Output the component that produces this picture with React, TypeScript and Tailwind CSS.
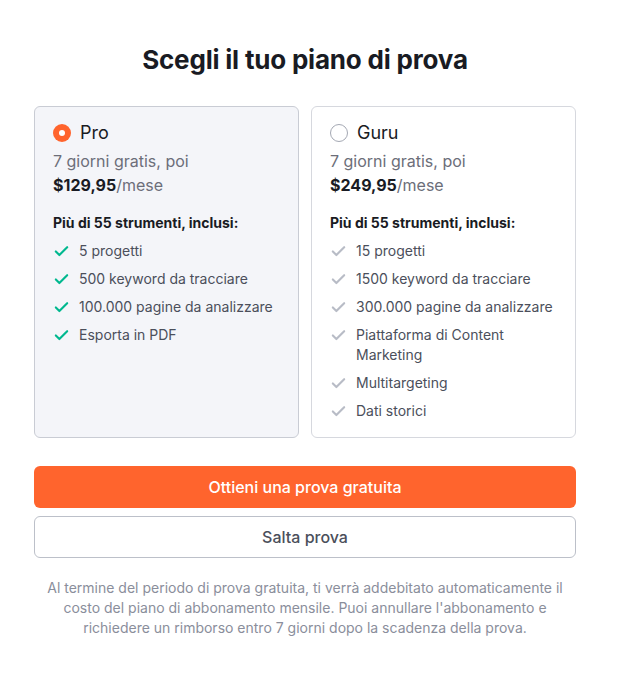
import { Check } from 'lucide-react';

type Plan = {
  id: string;
  name: string;
  price: string;
  features: string[];
  selected?: boolean;
};

const plans: Plan[] = [
  {
    id: 'pro',
    name: 'Pro',
    price: '$129,95',
    selected: true,
    features: ['5 progetti', '500 keyword da tracciare', '100.000 pagine da analizzare', 'Esporta in PDF'],
  },
  {
    id: 'guru',
    name: 'Guru',
    price: '$249,95',
    features: [
      '15 progetti',
      '1500 keyword da tracciare',
      '300.000 pagine da analizzare',
      'Piattaforma di Content Marketing',
      'Multitargeting',
      'Dati storici',
    ],
  },
];

const PlanCard = ({ plan }: { plan: Plan }) => (
  <div
    className={`flex-1 rounded-md border pt-[12px] pb-[16px] pl-[18px] pr-[14px] ${
      plan.selected ? 'bg-[#f4f5f9] border-[#c9ccd4]' : 'bg-white border-[#d6d8de]'
    }`}
  >
    <div className="flex items-center gap-[9px] h-[28px]">
      {plan.selected ? (
        <span className="w-[18px] h-[18px] rounded-full bg-[#ff642d] flex items-center justify-center">
          <span className="w-[6px] h-[6px] rounded-full bg-white" />
        </span>
      ) : (
        <span className="w-[18px] h-[18px] rounded-full border border-[#a4a8b3] bg-white" />
      )}
      <span className="text-[18px] leading-[28px] text-[#191b23]">{plan.name}</span>
    </div>
    <p className="mt-[2px] text-[16px] leading-[24px] text-[#6c6e79]">7 giorni gratis, poi</p>
    <p className="text-[16px] leading-[24px] text-[#6c6e79]">
      <span className="font-bold text-[#191b23]">{plan.price}</span>/mese
    </p>
    <p className="mt-[16px] text-[14px] leading-[20px] font-bold text-[#191b23]">Più di 55 strumenti, inclusi:</p>
    <ul className="mt-[8px] flex flex-col gap-[8px]">
      {plan.features.map((f) => (
        <li key={f} className="flex items-start gap-[9px] text-[14px] leading-[20px] text-[#4b4f5b]">
          <Check
            size={17}
            strokeWidth={3}
            className={`mt-[2px] shrink-0 ${plan.selected ? 'text-[#00b88f]' : 'text-[#b8bcc6]'}`}
          />
          <span>{f}</span>
        </li>
      ))}
    </ul>
  </div>
);

const App = () => {
  return (
    <div className="min-h-screen bg-white font-['Inter',sans-serif]">
      <div className="ml-[34px] w-[542px] pt-[42px] flex flex-col">
        <h1 className="text-center text-[26px] leading-[36px] font-bold tracking-[-0.2px] text-[#191b23]">
          Scegli il tuo piano di prova
        </h1>

        <div className="mt-[28px] flex items-stretch gap-[12px]">
          {plans.map((p) => (
            <PlanCard key={p.id} plan={p} />
          ))}
        </div>

        <button className="mt-[28px] h-[42px] rounded-md bg-[#ff642d] text-white text-[16px] font-medium">
          Ottieni una prova gratuita
        </button>
        <button className="mt-[8px] h-[42px] rounded-md border border-[#bcc0c9] bg-white text-[#4b4f5b] text-[16px] font-medium">
          Salta prova
        </button>

        <p className="mt-[20px] px-[8px] text-center text-[14px] leading-[20px] text-[#8a8e9b]">
          Al termine del periodo di prova gratuita, ti verrà addebitato automaticamente il costo del piano di
          abbonamento mensile. Puoi annullare l'abbonamento e richiedere un rimborso entro 7 giorni dopo la scadenza
          della prova.
        </p>
      </div>
    </div>
  );
};

export default App;
